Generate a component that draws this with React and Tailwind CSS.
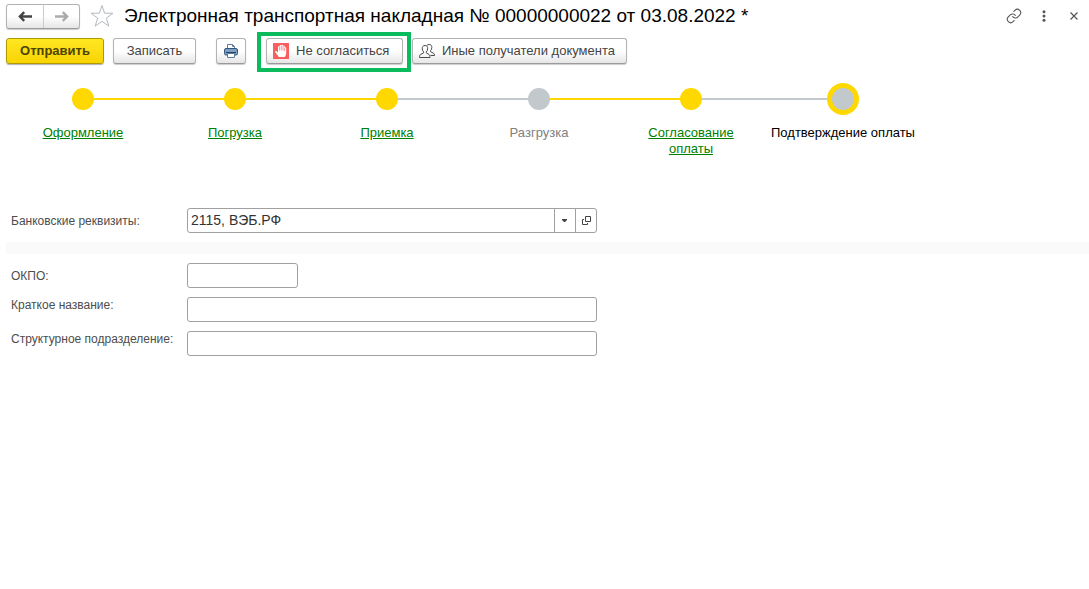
import React from "react";
import { Link as LinkIcon } from "lucide-react";

const buttonBase =
  "flex h-[26px] items-center rounded-[3px] border border-[#b3b3b3] border-b-[#9a9a9a] bg-linear-to-b from-white from-50% to-[#e6e6e6] text-[13px] text-[#444] shadow-[0_1px_1px_rgba(0,0,0,0.2)]";

const inputBase =
  "h-[25px] rounded-[3px] border border-[#a0a0a0] bg-white px-[3px] text-[14px] text-[#333] outline-none";

const YELLOW = "bg-[#ffd800]";
const GRAY = "bg-[#c2c9cc]";

const steps = [
  { label: "Оформление", left: "", right: YELLOW, dot: YELLOW, link: true },
  { label: "Погрузка", left: YELLOW, right: YELLOW, dot: YELLOW, link: true },
  { label: "Приемка", left: YELLOW, right: GRAY, dot: YELLOW, link: true },
  { label: "Разгрузка", left: GRAY, right: YELLOW, dot: GRAY, color: "text-[#808080]" },
  { label: "Согласование оплаты", left: YELLOW, right: GRAY, dot: YELLOW, link: true },
  { label: "Подтверждение оплаты", left: GRAY, right: "", dot: GRAY, color: "text-black", current: true },
];

function Arrow({ back, color }) {
  return (
    <svg width="14" height="11" viewBox="0 0 14 11" fill="none" stroke={color} strokeWidth="2.4" aria-hidden="true">
      {back ? <path d="M14 5.500H2M6.200 1.200L1.900 5.500l4.300 4.300" /> : <path d="M0 5.500h12M7.800 1.200l4.300 4.300-4.300 4.300" />}
    </svg>
  );
}

function Star() {
  return (
    <svg width="24" height="24" viewBox="0 0 24 24" fill="none" stroke="#b4bac0" aria-hidden="true">
      <path d="M12 1.500l2.600 7.700h8.400l-6.700 4.900 2.500 8L12 17.300l-6.800 4.800 2.500-8L1 9.200h8.400z" />
    </svg>
  );
}

function Printer() {
  return (
    <svg width="14" height="14" viewBox="0 0 14 14" fill="none" aria-hidden="true">
      <path d="M3.500 6V.5h5l2 2V6" fill="#fff" stroke="#5f7c9b" />
      <path d="M8.500.5v2h2" stroke="#5f7c9b" />
      <rect x=".5" y="4.500" width="13" height="6.500" rx="1.500" fill="#7f9fc0" stroke="#34587d" />
      <path d="M2 8.500h10" stroke="#23456a" />
      <path d="M3.500 9.500h7v4h-7z" fill="#fff" stroke="#5f7c9b" />
    </svg>
  );
}

function Hand() {
  return (
    <svg width="16" height="16" viewBox="0 0 16 16" aria-hidden="true">
      <rect width="16" height="16" fill="#fa5f5f" />
      <path
        d="M5.700 14c-.7-1.700-2.300-3.200-3.300-4.600-.6-1 .6-1.700 1.400-1l1.200 1.100V4.200c0-1.200 1.600-1.200 1.600 0V3c0-1.300 1.700-1.300 1.700 0v-.3c0-1.200 1.700-1.200 1.700 0V3.200c0-1.100 1.600-1.100 1.600 0V5c0-1.100 1.600-1.100 1.600 0v5.300c0 1.500-.8 2.300-1.200 3.700z"
        fill="#fff"
      />
      <path d="M6.600 4v3.500M8.300 3v4.500M10 3.200v4.300M11.600 5v3" stroke="#e57272" strokeWidth=".7" />
    </svg>
  );
}

function People() {
  return (
    <svg width="16" height="14" viewBox="0 0 16 14" fill="none" stroke="#4a4a4a" aria-hidden="true">
      <path d="M6 1.500C3.900 1.500 3.100 3 3.300 4.900c.1 1.400.6 2.400 1.300 3v1L1.500 10.500c-.7.400-1 1.300-1 3h10.500c0-1.700-.3-2.600-1-3L7.300 8.900v-1C8 7.300 8.500 6.300 8.600 4.900 8.800 3 8.100 1.500 6 1.500z" />
      <path d="M7.900 1.500C8.400.8 9.200.5 10.100.5c2.100 0 2.900 1.400 2.700 3.200-.1 1.400-.6 2.400-1.300 3v1l3 1.500c.7.400 1 1.200 1 2.300h-4" />
    </svg>
  );
}

function Step({ step }) {
  return (
    <li className="flex w-[152px] flex-col items-center">
      <div className="flex h-8 w-full items-center">
        <span className={`h-[2px] flex-1 ${step.left}`} />
        {step.current ? (
          <span className="size-8 rounded-full border-[5px] border-[#ffd800] bg-[#c2c9cc]" />
        ) : (
          <span className={`size-[22px] rounded-full ${step.dot}`} />
        )}
        <span className={`h-[2px] flex-1 ${step.right}`} />
      </div>
      <div className="mt-[10px] text-center text-[13px] leading-4">
        {step.link ? (
          <a href="#" className="block w-min text-[#008000] underline">
            {step.label}
          </a>
        ) : (
          <span className={`whitespace-nowrap ${step.color}`}>{step.label}</span>
        )}
      </div>
    </li>
  );
}

export default function App() {
  return (
    <main className="min-h-screen bg-white font-['Liberation_Sans',Arial,sans-serif]">
      <header className="flex h-8 items-center pr-[7px] pl-[6px]">
        <div className="flex h-[25px] rounded-[3px] border border-[#b3b3b3] border-b-[#9a9a9a] bg-linear-to-b from-white from-50% to-[#e6e6e6] shadow-[0_1px_1px_rgba(0,0,0,0.2)]">
          <button type="button" aria-label="Назад" className="flex w-9 items-center justify-center">
            <Arrow back color="#444" />
          </button>
          <button type="button" aria-label="Вперед" className="flex w-9 items-center justify-center border-l border-[#ccc]">
            <Arrow color="#aaa" />
          </button>
        </div>
        <button type="button" aria-label="В избранное" className="ml-[10px]">
          <Star />
        </button>
        <h1 className="ml-[10px] flex-1 text-[19px] leading-8 whitespace-nowrap text-black">
          Электронная транспортная накладная № 00000000022 от 03.08.2022 *
        </h1>
        <div className="flex items-center gap-[14px]">
          <button type="button" aria-label="Получить ссылку">
            <LinkIcon size={16} strokeWidth={1.6} color="#555" aria-hidden="true" />
          </button>
          <button type="button" aria-label="Еще" className="flex w-4 justify-center">
            <svg width="4" height="12" viewBox="0 0 4 12" fill="#555" aria-hidden="true">
              <circle cx="2" cy="1.700" r="1.500" />
              <circle cx="2" cy="6" r="1.500" />
              <circle cx="2" cy="10.300" r="1.500" />
            </svg>
          </button>
          <button type="button" aria-label="Закрыть" className="flex w-4 justify-center">
            <svg width="8" height="8" viewBox="0 0 8 8" stroke="#555" strokeWidth="1.200" aria-hidden="true">
              <path d="M.5.5l7 7M7.500.5l-7 7" />
            </svg>
          </button>
        </div>
      </header>

      <div className="flex h-10 items-start pt-[6px] pl-[6px]">
        <button
          type="button"
          className="h-[26px] w-[98px] rounded-[3px] border border-[#b09a00] bg-linear-to-b from-[#ffe720] to-[#f8d400] text-[13px] font-bold text-[#4d4400] shadow-[0_1px_1px_rgba(0,0,0,0.3)]"
        >
          Отправить
        </button>
        <button type="button" className={`${buttonBase} ml-[9px] w-[83px] justify-center`}>
          Записать
        </button>
        <button type="button" aria-label="Печать" className={`${buttonBase} ml-5 w-[30px] justify-center`}>
          <Printer />
        </button>
        <div className="-mt-[6px] ml-[11px] flex h-10 items-start border-4 border-[#0bbb5c] pt-[2px] pr-1 pl-[5px]">
          <button type="button" className={`${buttonBase} w-[137px] gap-[7px] pl-[6px]`}>
            <Hand />
            Не согласиться
          </button>
        </div>
        <button type="button" className={`${buttonBase} ml-px w-[215px] gap-[7px] pl-[6px]`}>
          <People />
          Иные получатели документа
        </button>
      </div>

      <ol className="mt-[11px] flex pl-[7px]">
        {steps.map((step) => (
          <Step key={step.label} step={step} />
        ))}
      </ol>

      <form className="mt-[51px] text-[12px] text-[#4d4d4d]">
        <div className="flex items-center pl-[11px]">
          <label htmlFor="bank" className="w-44">
            Банковские реквизиты:
          </label>
          <div className="flex h-[25px] w-[410px] rounded-[3px] border border-[#a0a0a0]">
            <input
              id="bank"
              type="text"
              defaultValue="2115, ВЭБ.РФ"
              className="min-w-0 flex-1 bg-transparent px-[3px] text-[14px] text-[#333] outline-none"
            />
            <button type="button" aria-label="Выбрать" className="flex w-[21px] items-center justify-center border-l border-[#a0a0a0]">
              <svg width="6" height="3" viewBox="0 0 6 3" fill="#444" aria-hidden="true">
                <path d="M0 0h5v1L3 3H2L0 1z" />
              </svg>
            </button>
            <button type="button" aria-label="Открыть" className="flex w-[21px] items-center justify-center border-l border-[#a0a0a0]">
              <svg width="9" height="9" viewBox="0 0 9 9" fill="none" stroke="#444" aria-hidden="true">
                <path d="M3.500.5h5v5h-5zM2 3.500H.5v5h5V7" />
              </svg>
            </button>
          </div>
        </div>

        <div className="mt-[9px] ml-[6px] h-3 bg-[#fafafa]" />

        <div className="mt-[9px] flex flex-col gap-[9px] pl-[11px]">
          <div className="flex items-center">
            <label htmlFor="okpo" className="w-44">
              ОКПО:
            </label>
            <input id="okpo" type="text" className={`${inputBase} w-[111px]`} />
          </div>
          <div className="flex items-start">
            <label htmlFor="short-name" className="w-44 leading-4">
              Краткое название:
            </label>
            <input id="short-name" type="text" className={`${inputBase} w-[410px]`} />
          </div>
          <div className="flex items-start">
            <label htmlFor="division" className="w-44 leading-4">
              Структурное подразделение:
            </label>
            <input id="division" type="text" className={`${inputBase} w-[410px]`} />
          </div>
        </div>
      </form>
    </main>
  );
}
